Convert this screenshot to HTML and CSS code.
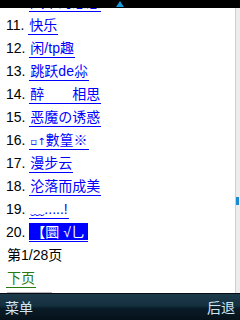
FILE: index.html
```html
<!DOCTYPE html>
<html lang="zh">
<head>
  <meta charset="UTF-8" />
  <meta name="viewport" content="width=device-width, initial-scale=1.0"/>
  <title>列表</title>
  <link rel="stylesheet" href="styles.css">
</head>
<body>

  <div class="topbar">
    <svg class="uparrow" width="8" height="7" viewBox="0 0 8 7">
      <polygon points="4,0 8,6 0,6" fill="#1a9ad8"/>
    </svg>
  </div>

  <div class="page">
    <div class="list">
      <div class="row"><span class="num">10.</span> <a href="#">风中的思念</a></div>
      <div class="row"><span class="num">11.</span> <a href="#">快乐</a></div>
      <div class="row"><span class="num">12.</span> <a href="#">闲/tp趣</a></div>
      <div class="row"><span class="num">13.</span> <a href="#">跳跃de尛</a></div>
      <div class="row"><span class="num">14.</span> <a href="#">醉　　相思</a></div>
      <div class="row"><span class="num">15.</span> <a href="#">恶魔の诱惑</a></div>
      <div class="row"><span class="num">16.</span> <a href="#"><span class="half">▫↑</span>數篁※</a></div>
      <div class="row"><span class="num">17.</span> <a href="#">漫步云</a></div>
      <div class="row"><span class="num">18.</span> <a href="#">沦落而成美</a></div>
      <div class="row"><span class="num">19.</span> <a href="#">﹏.....!</a></div>
      <div class="row"><span class="num">20.</span> <a href="#" class="sel"><span class="hl">【圜 √乚</span></a></div>
    </div>

    <div class="row pager">第1/28页</div>
    <div class="row next"><a href="#">下页</a></div>
    <div class="goto"></div>
  </div>

  <div class="scrollbar"><div class="thumb"></div></div>

  <div class="softkeys">
    <span>菜单</span>
    <span>后退</span>
  </div>

</body>
</html>
```

FILE: styles.css
```css
html, body {
  margin: 0;
  height: 100%;
  overflow: hidden;
  background: #fff;
}

body {
  font-family: "Liberation Sans", "Noto Sans CJK SC", sans-serif;
  font-size: 14px;
  color: #000;
}

.topbar {
  position: fixed;
  top: 0;
  left: 0;
  right: 0;
  height: 8px;
  background: #000;
  z-index: 2;
}

.uparrow {
  position: absolute;
  left: 116px;
  top: 1px;
}

.page {
  margin-top: -9px;
  padding-left: 6px;
  padding-right: 8px;
}

.row {
  height: 23px;
  line-height: 23px;
  white-space: nowrap;
}

.row a {
  color: #0000ff;
  text-decoration: none;
  border-bottom: 1px solid #0000ff;
  padding: 0 1px 1px;
}

.half {
  font-family: "DejaVu Sans", sans-serif;
  font-size: 10px;
}

.row a.sel {
  color: #fff;
  padding: 0 0 1px;
}

.hl {
  background: #0000ff;
  padding: 1px 3px 0 2px;
}

.pager {
  padding-left: 1px;
}

.next a {
  color: #267a10;
  border-bottom-color: #267a10;
}

.goto {
  margin: 2px 0 0 1px;
  width: 43px;
  height: 20px;
  border: 1px solid #b8b8b8;
}

.scrollbar {
  position: fixed;
  top: 8px;
  right: 0;
  bottom: 27px;
  width: 4px;
  background: #ececec;
  border-left: 1px solid #d0d0d0;
}

.thumb {
  margin-top: 189px;
  width: 3px;
  height: 8px;
  background: #1a8ad0;
}

.softkeys {
  position: fixed;
  left: 0;
  right: 0;
  bottom: 0;
  height: 26px;
  border-top: 1px solid #050d12;
  background: linear-gradient(to bottom, #1d3a4b 0%, #15303f 45%, #0a1c28 55%, #06121a 100%);
  display: flex;
  justify-content: space-between;
  align-items: center;
  padding: 0 5px;
  color: #cfe6f6;
  font-size: 14px;
  z-index: 2;
}
```
